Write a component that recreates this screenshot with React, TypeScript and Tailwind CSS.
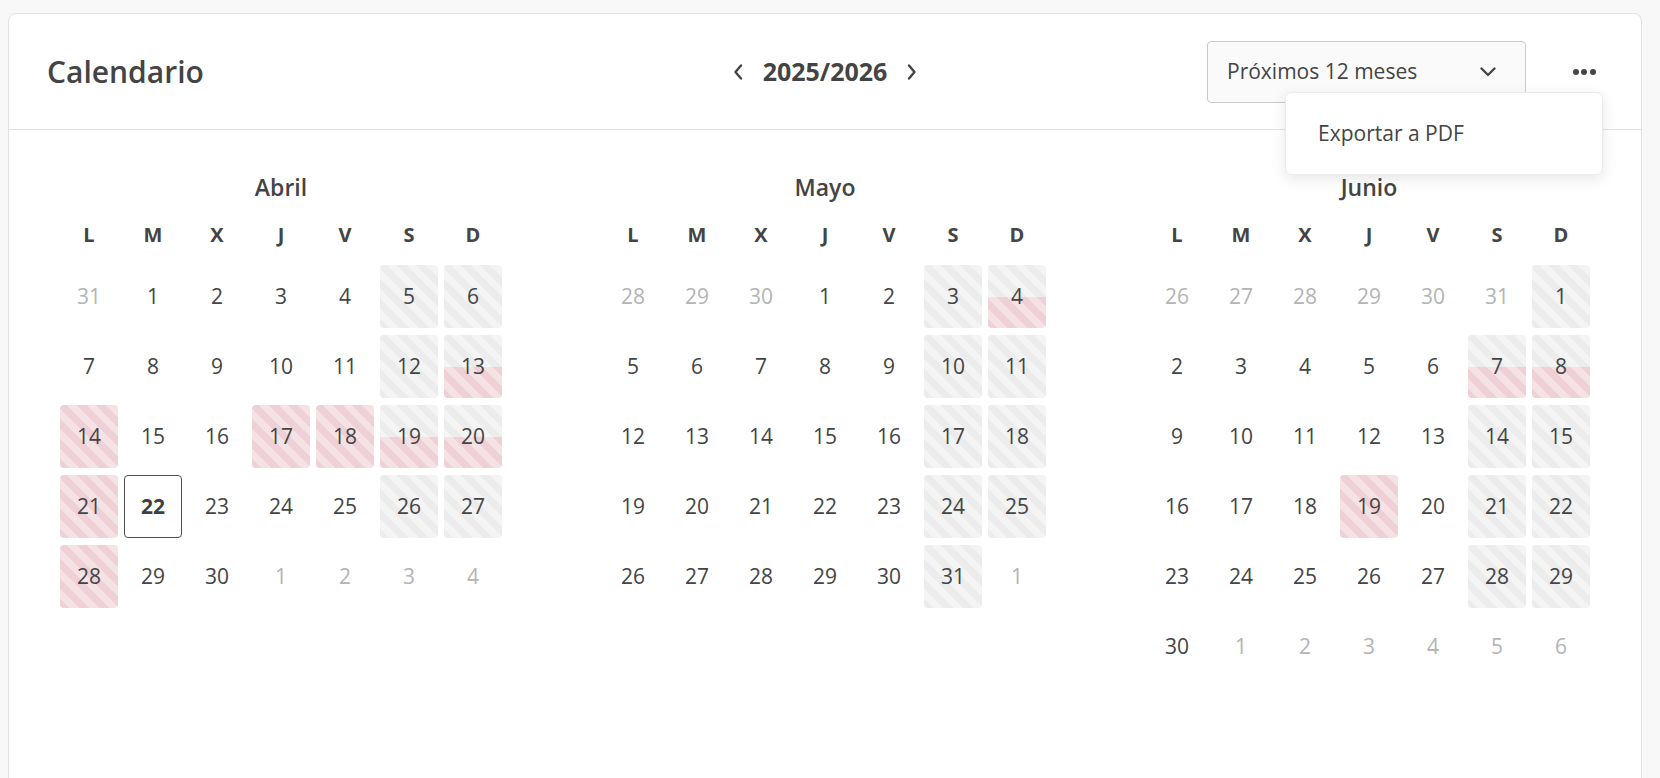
import React from "react";

type Kind = "n" | "o" | "g" | "p" | "h" | "t";
type Cell = [number, Kind];

const abril: Cell[] = [
  [31, "o"], [1, "n"], [2, "n"], [3, "n"], [4, "n"], [5, "g"], [6, "g"],
  [7, "n"], [8, "n"], [9, "n"], [10, "n"], [11, "n"], [12, "g"], [13, "h"],
  [14, "p"], [15, "n"], [16, "n"], [17, "p"], [18, "p"], [19, "h"], [20, "h"],
  [21, "p"], [22, "t"], [23, "n"], [24, "n"], [25, "n"], [26, "g"], [27, "g"],
  [28, "p"], [29, "n"], [30, "n"], [1, "o"], [2, "o"], [3, "o"], [4, "o"],
];

const mayo: Cell[] = [
  [28, "o"], [29, "o"], [30, "o"], [1, "n"], [2, "n"], [3, "g"], [4, "h"],
  [5, "n"], [6, "n"], [7, "n"], [8, "n"], [9, "n"], [10, "g"], [11, "g"],
  [12, "n"], [13, "n"], [14, "n"], [15, "n"], [16, "n"], [17, "g"], [18, "g"],
  [19, "n"], [20, "n"], [21, "n"], [22, "n"], [23, "n"], [24, "g"], [25, "g"],
  [26, "n"], [27, "n"], [28, "n"], [29, "n"], [30, "n"], [31, "g"], [1, "o"],
];

const junio: Cell[] = [
  [26, "o"], [27, "o"], [28, "o"], [29, "o"], [30, "o"], [31, "o"], [1, "g"],
  [2, "n"], [3, "n"], [4, "n"], [5, "n"], [6, "n"], [7, "h"], [8, "h"],
  [9, "n"], [10, "n"], [11, "n"], [12, "n"], [13, "n"], [14, "g"], [15, "g"],
  [16, "n"], [17, "n"], [18, "n"], [19, "p"], [20, "n"], [21, "g"], [22, "g"],
  [23, "n"], [24, "n"], [25, "n"], [26, "n"], [27, "n"], [28, "g"], [29, "g"],
  [30, "n"], [1, "o"], [2, "o"], [3, "o"], [4, "o"], [5, "o"], [6, "o"],
];

const GRAY =
  "bg-[repeating-linear-gradient(45deg,#ececec_0px,#ececec_7px,#f4f4f4_7px,#f4f4f4_14px)]";
const PINK =
  "bg-[repeating-linear-gradient(45deg,#efd0d6_0px,#efd0d6_7px,#f5e2e5_7px,#f5e2e5_14px)]";

function DayCell({ d, k }: { d: number; k: Kind }) {
  if (k === "t") {
    return (
      <div className="h-[63px] rounded-[4px] border border-[#505050] bg-white flex items-center justify-center font-bold text-[#3f3f3f]">
        {d}
      </div>
    );
  }
  if (k === "h") {
    return (
      <div className={`relative h-[63px] rounded-[4px] overflow-hidden ${GRAY} flex items-center justify-center text-[#444]`}>
        <div className={`absolute left-0 right-0 bottom-0 h-[31px] ${PINK}`} />
        <span className="relative">{d}</span>
      </div>
    );
  }
  const bg = k === "g" ? GRAY : k === "p" ? PINK : "";
  const color = k === "o" ? "text-[#b4b4b4]" : "text-[#444]";
  return (
    <div className={`h-[63px] rounded-[4px] flex items-center justify-center ${bg} ${color}`}>
      {d}
    </div>
  );
}

function Month({ name, cells }: { name: string; cells: Cell[] }) {
  const days = ["L", "M", "X", "J", "V", "S", "D"];
  return (
    <div className="w-[442px]">
      <div className="h-[36px] flex items-center justify-center text-[23px] font-semibold text-[#444]">
        {name}
      </div>
      <div className="mt-[12px] h-[36px] grid grid-cols-7 gap-x-[6px] items-center">
        {days.map((d) => (
          <div key={d} className="text-center text-[20px] font-bold text-[#444]">
            {d}
          </div>
        ))}
      </div>
      <div className="mt-[12px] grid grid-cols-7 gap-x-[6px] gap-y-[7px] text-[21px]">
        {cells.map(([d, k], i) => (
          <DayCell key={i} d={d} k={k} />
        ))}
      </div>
    </div>
  );
}

export default function App() {
  return (
    <div
      className="w-[1660px] h-[778px] overflow-hidden bg-[#f8f8f8] pl-[8px] pt-[13px]"
      style={{ fontFamily: '"Open Sans", "Noto Sans", sans-serif' }}
    >
      <div className="relative w-[1634px] h-[800px] bg-white border border-[#e2e2e2] rounded-[8px]">
        <div className="h-[116px] border-b border-[#e2e2e2] grid grid-cols-[1fr_auto_1fr] items-center">
          <div className="pl-[38px] text-[30px] font-semibold text-[#444]">Calendario</div>
          <div className="flex items-center gap-[19px] text-[#444]">
            <svg width="12" height="18" viewBox="0 0 12 18" fill="none">
              <path d="M9 2.5L3.5 9L9 15.5" stroke="#444" strokeWidth="2.4" strokeLinecap="round" strokeLinejoin="round" />
            </svg>
            <span className="text-[25px] font-bold">2025/2026</span>
            <svg width="12" height="18" viewBox="0 0 12 18" fill="none">
              <path d="M3 2.5L8.5 9L3 15.5" stroke="#444" strokeWidth="2.4" strokeLinecap="round" strokeLinejoin="round" />
            </svg>
          </div>
          <div className="flex items-center justify-end pr-[42px]">
            <div className="w-[319px] h-[62px] rounded-[4px] border border-[#c9c9c9] bg-[#fafafa] flex items-center justify-between pl-[19px] pr-[29px]">
              <span className="text-[21px] text-[#444]">Próximos 12 meses</span>
              <svg width="16" height="10" viewBox="0 0 16 10" fill="none">
                <path d="M1.5 1.5L8 8L14.5 1.5" stroke="#444" strokeWidth="2.4" strokeLinecap="round" strokeLinejoin="round" />
              </svg>
            </div>
            <div className="ml-[43px] w-[30px] h-[30px] flex items-center justify-center gap-[2.5px]">
              <span className="w-[6px] h-[6px] rounded-full bg-[#444]" />
              <span className="w-[6px] h-[6px] rounded-full bg-[#444]" />
              <span className="w-[6px] h-[6px] rounded-full bg-[#444]" />
            </div>
          </div>
        </div>

        <div className="flex justify-between px-[51px] pt-[39px]">
          <Month name="Abril" cells={abril} />
          <Month name="Mayo" cells={mayo} />
          <Month name="Junio" cells={junio} />
        </div>

        <div className="absolute top-[78px] right-[38px] w-[318px] h-[83px] bg-white rounded-[6px] border border-[#ececec] shadow-[0_4px_14px_rgba(0,0,0,0.10)] flex items-center pl-[32px] text-[21px] text-[#444]">
          Exportar a PDF
        </div>
      </div>
    </div>
  );
}
